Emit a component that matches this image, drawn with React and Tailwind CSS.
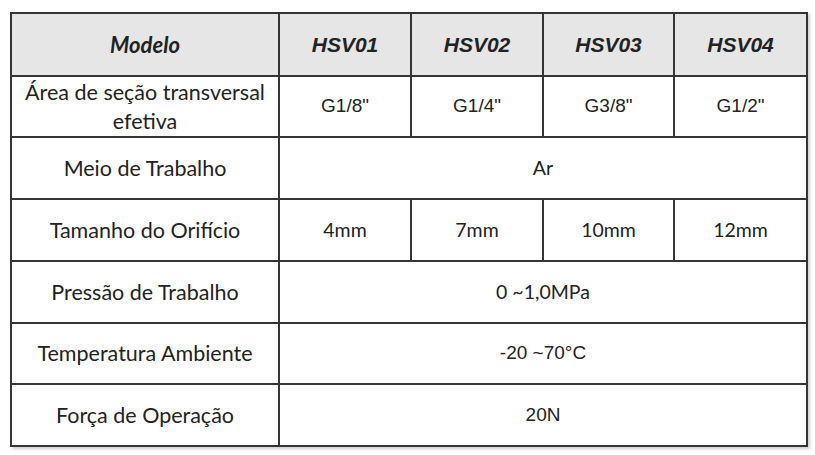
const calibri = "font-['Lato','Liberation_Sans',sans-serif]"
const arial = "font-['Liberation_Sans',Arial,sans-serif]"

const cell = 'border-2 border-[#353535] text-center align-middle p-0'

const rows = [
  { h: 'h-[61px]', label: ['Área de seção transversal', 'efetiva'], values: ['G1/8"', 'G1/4"', 'G3/8"', 'G1/2"'], font: arial },
  { h: 'h-[62px]', label: ['Meio de Trabalho'], span: 'Ar', font: calibri },
  { h: 'h-[62px]', label: ['Tamanho do Orifício'], values: ['4mm', '7mm', '10mm', '12mm'], font: calibri },
  { h: 'h-[62px]', label: ['Pressão de Trabalho'], span: '0 ~1,0MPa', font: calibri },
  { h: 'h-[61px]', label: ['Temperatura Ambiente'], span: '-20 ~70°C', font: arial },
  { h: 'h-[62px]', label: ['Força de Operação'], span: '20N', font: arial },
]

export default function App() {
  return (
    <div className="w-[815px] h-[455px] bg-white pt-[12px] pl-[10px]">
      <table className="w-[796px] table-fixed border-collapse shadow-[2px_2px_3px_rgba(0,0,0,0.2)] text-[#222]">
        <colgroup>
          <col className="w-[268px]" />
          <col className="w-[132px]" />
          <col className="w-[132px]" />
          <col className="w-[131px]" />
          <col className="w-[133px]" />
        </colgroup>
        <thead>
          <tr className="h-[63px] bg-[#e6e6e6]">
            <th className={`${cell} ${calibri} text-[22px] font-bold italic`}>Modelo</th>
            {['HSV01', 'HSV02', 'HSV03', 'HSV04'].map((m) => (
              <th key={m} className={`${cell} ${arial} text-[21px] font-bold italic`}>
                {m}
              </th>
            ))}
          </tr>
        </thead>
        <tbody>
          {rows.map((row, i) => (
            <tr key={i} className={row.h}>
              <td className={`${cell} ${calibri} text-[21.5px] leading-[29px]`}>
                {row.label.map((l) => (
                  <div key={l}>{l}</div>
                ))}
              </td>
              {row.values ? (
                row.values.map((v) => (
                  <td key={v} className={`${cell} ${row.font} ${row.font === arial ? 'text-[19px]' : 'text-[19.5px]'}`}>
                    {v}
                  </td>
                ))
              ) : (
                <td colSpan={4} className={`${cell} ${row.font} ${row.font === arial ? 'text-[19px]' : 'text-[19.5px]'}`}>
                  {row.span}
                </td>
              )}
            </tr>
          ))}
        </tbody>
      </table>
    </div>
  )
}
